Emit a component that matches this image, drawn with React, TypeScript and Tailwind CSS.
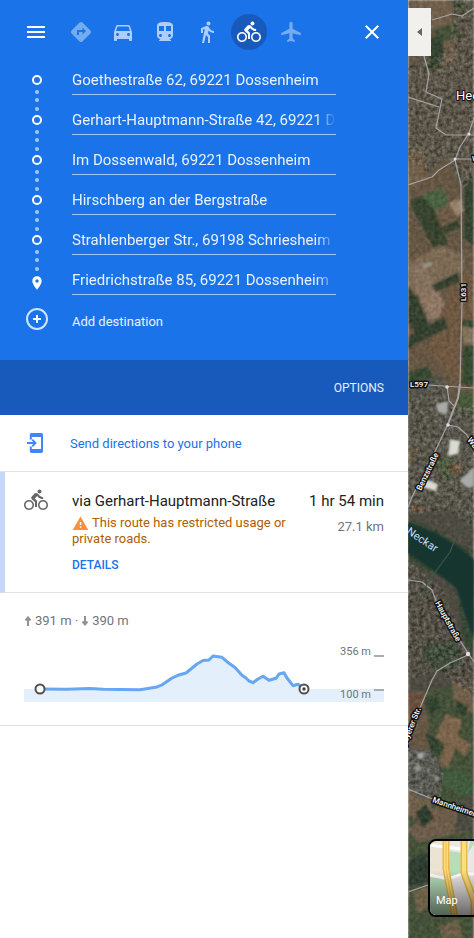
import React, { useState } from 'react';
import {
  MdClose,
  MdDirections,
  MdDirectionsBike,
  MdDirectionsCar,
  MdDirectionsTransit,
  MdDirectionsWalk,
  MdMenu,
  MdPlace,
  MdWarning,
} from 'react-icons/md';

const STOPS = [
  'Goethestraße 62, 69221 Dossenheim',
  'Gerhart-Hauptmann-Straße 42, 69221 Dossenheim',
  'Im Dossenwald, 69221 Dossenheim',
  'Hirschberg an der Bergstraße',
  'Strahlenberger Str., 69198 Schriesheim',
  'Friedrichstraße 85, 69221 Dossenheim',
];

function PlaneIcon({ size }: { size: number }) {
  return (
    <svg width={size} height={size} viewBox="0 0 24 24" fill="currentColor" aria-hidden="true">
      <path d="M12 1.800c-1 0-1.600.800-1.600 1.700V8.800L2.200 13V15.200L10.400 13.300V18.500L8.200 20.300V22L12 21l3.800 1V20.300L13.600 18.500V13.300L21.800 15.200V13L13.600 8.800V3.500C13.600 2.600 13 1.800 12 1.800z" />
    </svg>
  );
}

const MODES = [
  { id: 'best', label: 'Best travel modes', icon: MdDirections, tone: 'text-white/40' },
  { id: 'car', label: 'Driving', icon: MdDirectionsCar, tone: 'text-white/65' },
  { id: 'transit', label: 'Transit', icon: MdDirectionsTransit, tone: 'text-white/65' },
  { id: 'walk', label: 'Walking', icon: MdDirectionsWalk, tone: 'text-white/65' },
  { id: 'bike', label: 'Cycling', icon: MdDirectionsBike, tone: 'text-white/65' },
  { id: 'flight', label: 'Flights', icon: PlaneIcon, tone: 'text-white/40' },
];

function TravelModes() {
  const [mode, setMode] = useState('bike');

  return (
    <header className="flex items-center justify-between px-6 pt-[14px] pb-[10px]">
      <button aria-label="Menu" className="text-white">
        <MdMenu size={24} />
      </button>
      <div className="mr-[36px] flex gap-[6px]">
        {MODES.map(({ id, label, icon: Icon, tone }) => (
          <button
            key={id}
            aria-label={label}
            aria-pressed={mode === id}
            onClick={() => setMode(id)}
            className={`flex size-9 items-center justify-center rounded-full ${
              mode === id ? 'bg-[#185abc] text-white' : tone
            }`}
          >
            <Icon size={24} />
          </button>
        ))}
      </div>
      <button aria-label="Close directions" className="text-white">
        <MdClose size={24} />
      </button>
    </header>
  );
}

function Waypoints() {
  return (
    <div className="flex pl-6">
      {/* Stop markers joined by dots */}
      <div aria-hidden="true" className="flex w-[26px] flex-col items-center pt-[15px]">
        {STOPS.slice(1).map((stop) => (
          <div key={stop} className="flex h-10 flex-col items-center">
            <span className="size-[10px] rounded-full border-2 border-white" />
            <span className="flex flex-1 flex-col justify-evenly">
              <i className="size-1 rounded-full bg-white/60" />
              <i className="size-1 rounded-full bg-white/60" />
              <i className="size-1 rounded-full bg-white/60" />
            </span>
          </div>
        ))}
        <MdPlace size={16} className="text-white" />
      </div>

      <ol className="ml-[22px] w-[264px]">
        {STOPS.map((stop, i) => (
          <li key={stop} className="flex h-10 items-center">
            <div className="h-[30px] w-full border-b border-white/60">
              <input
                type="text"
                aria-label={i === STOPS.length - 1 ? 'Destination' : `Stop ${i + 1}`}
                defaultValue={stop}
                className="h-full w-full bg-transparent text-[15px] text-white/90 outline-none [mask-image:linear-gradient(to_right,black_244px,transparent)]"
              />
            </div>
          </li>
        ))}
      </ol>
    </div>
  );
}

function PhoneIcon() {
  return (
    <svg width="24" height="24" viewBox="0 0 24 24" fill="#4285f4" aria-hidden="true">
      <path d="M7.500 2H17.300A1.800 1.800 0 0 1 19 3.800V20.200A1.800 1.800 0 0 1 17.300 22H7.500A1.800 1.800 0 0 1 5.800 20.200V15.500H7.800V18H17V6H7.800V8.500H5.800V3.800A1.800 1.800 0 0 1 7.500 2z" />
      <path d="M3 11.100h6.300L7.600 9.400l1.300-1.300L12.800 12l-3.900 3.900-1.300-1.300L9.300 12.900H3z" />
    </svg>
  );
}

function RouteCard() {
  return (
    <section className="flex min-h-[121px] border-b border-l-[5px] border-b-[#dfe1e3] border-l-[#c6d8f9] pt-4 pr-6 pl-[19px]">
      <MdDirectionsBike size={24} className="shrink-0 text-[#666]" />
      <div className="ml-6 flex-1 pt-px">
        <div className="flex justify-between text-[15px] leading-6 text-[#202124]">
          <h1>via Gerhart-Hauptmann-Straße</h1>
          <span>1 hr 54 min</span>
        </div>
        <div className="flex justify-between text-[13px] leading-4">
          <p className="mt-[2px] w-[224px] text-[#b06000]">
            <MdWarning size={17} className="-my-1 inline-block align-[-1px] text-[#fa903e]" /> This route has
            restricted usage or private roads.
          </p>
          <span className="mt-[6px] text-[#70757a]">27.1 km</span>
        </div>
        <button className="mt-[10px] block text-xs leading-4 font-medium text-[#1a73e8]">DETAILS</button>
      </div>
    </section>
  );
}

const PROFILE =
  '16,49 43,49.3 66,48.6 79,49.2 116,49.700 133,47 139,44.300 148,38 154,35.300 162,33 173,24 179,20.500 185,20 189,16 198,17.300 204,22.500 211,27.500 218,35.300 222,38 225,41 229,42.700 234,39 239,36.300 245,40.300 252,38.300 255,34 260,32.700 263,38 269,45.700 274,44.300 280,49';

function Elevation() {
  return (
    <section className="border-b border-[#dfe1e3] px-6 pt-5 pb-[23px]">
      <p className="flex items-center text-[13px] leading-4 text-[#70757a]">
        <svg width="8" height="10" viewBox="0 0 8 10" fill="none" stroke="#909498" strokeWidth="2" aria-hidden="true">
          <path d="M4 10V2M1.500 4.500 4 1.500l2.500 3" />
        </svg>
        <span className="ml-[3px]">391 m ·</span>
        <svg width="8" height="10" viewBox="0 0 8 10" className="ml-[3px]" fill="none" stroke="#909498" strokeWidth="2" aria-hidden="true">
          <path d="M4 0v8M1.500 5.500l2.500 3 2.500-3" />
        </svg>
        <span className="ml-[3px]">390 m</span>
      </p>
      <svg viewBox="0 0 360 62" className="mt-[11px] block w-full" role="img" aria-label="Elevation profile">
        <path d={`M0 62V49L${PROFILE} H360V62Z`} fill="#e3f0fc" />
        <polyline points={PROFILE} fill="none" stroke="#66a6f2" strokeWidth="3" strokeLinejoin="round" />
        <circle cx="16" cy="49" r="4.500" fill="#fff" stroke="#505050" strokeWidth="2" />
        <circle cx="280" cy="49" r="4.500" fill="#fff" stroke="#505050" strokeWidth="2" />
        <circle cx="280" cy="49" r="1.700" fill="#404040" />
        <path d="M350 16h10M350 50h10" stroke="#a9adb1" strokeWidth="2" />
        <g fontSize="11" fill="#70757a" textAnchor="end">
          <text x="347" y="15">356 m</text>
          <text x="347" y="58">100 m</text>
        </g>
      </svg>
    </section>
  );
}

function Satellite() {
  return (
    <svg
      viewBox="0 0 66 938"
      preserveAspectRatio="xMinYMin slice"
      className="absolute inset-0 h-full w-full"
      role="img"
      aria-label="Satellite map"
    >
      <defs>
        <filter id="soft" x="0" y="0" width="1" height="1">
          <feGaussianBlur stdDeviation="0.8" />
        </filter>
        <filter id="grain" x="0" y="0" width="1" height="1" colorInterpolationFilters="sRGB">
          <feTurbulence type="fractalNoise" baseFrequency="0.26" numOctaves="3" seed="4" />
          <feColorMatrix values="1.1 0 0 0 -.16  1.1 0 0 0 -.18  1.1 0 0 0 -.22  0 0 0 0 1" />
          <feGaussianBlur stdDeviation="0.6" />
        </filter>
        <clipPath id="towns">
          <path d="M0 66 20 60 42 45 46 0H66V180L55 188 40 158 18 172 0 160Z" />
          <path d="M0 402 28 380 48 408 66 405V528L40 510 0 515ZM0 560 35 590 55 640 66 660V700L30 670 0 680ZM0 750 25 750 36 775 32 800 0 790Z" />
        </clipPath>
      </defs>

      {/* Ground */}
      <g filter="url(#soft)">
        <path fill="#665643" d="M0 0H66V938H0Z" />
        <path fill="#595245" d="M0 62 25 55 45 40 46 0H66V180L50 184 40 155 20 175 0 160Z" />
        <path fill="#73604a" d="M4 0 42 0 44 22 26 30 3 26ZM28 42 46 36 50 58 34 70ZM0 150 16 148 20 178 0 190Z" />
        <path fill="#3f5034" d="M26 28 48 24 54 36 30 43ZM44 0 56 0 57 9 46 12Z" />
        <path fill="#2d402b" d="M18 38 34 36 37 52 32 68 18 70 22 54ZM56 180 66 180V245L56 240Z" />
        <path fill="#47643f" d="M14 195 34 188 41 202 27 212 18 208Z" />
        <path fill="#6e5a45" d="M26 214 52 196 56 212 36 228Z" />
        <path fill="#a18a71" d="M41 203 53 199 56 210 49 217Z" />
        <path fill="#30402c" d="M2 200 14 196 26 210 40 242 36 248 26 249 4 208ZM35 227 50 219 52 228 37 234Z" />
        <path fill="#806c54" d="M2 262 32 245 56 255 56 270 0 300Z" />
        <path fill="#8b7460" d="M0 267 14 262 40 310 37 317 20 320Z" />
        <path fill="#977b69" d="M14 298 30 290 40 312 24 320Z" />
        <path fill="#6f5941" d="M28 326 46 275 66 268V385L46 380 20 352Z" />
        <path fill="#2d3d2a" d="M24 285 50 272 52 281 28 292ZM0 285 9 298 21 326 8 335 0 322ZM0 337 36 317 40 328 8 344 0 350Z" />
        <path fill="#32472e" d="M54 320H66V330H56ZM54 347 66 345V385H54ZM0 372 20 366 28 380 0 383Z" />
        <path fill="#8a7860" d="M55 326 66 329V345L56 343Z" />
        <path fill="#53534a" d="M0 386 34 375 44 408 30 436 0 448ZM35 408 66 410V520L0 512V470Z" />
        <path fill="#445a38" d="M50 392H66V414L50 408ZM24 460 42 456 52 476 38 480Z" />
        <path fill="#73513b" d="M40 466 54 462 53 472 45 476ZM4 504 18 508 10 518 2 516Z" />
        <path fill="#4b493f" d="M0 512 40 508 66 520V700L20 690 0 692Z" />
        <path fill="#384633" d="M0 520 16 522 50 544 66 550V600L40 580 0 562Z" />
        <path fill="#304431" d="M14 646 48 640 55 665 34 672 15 660ZM50 600 66 610V650L56 646Z" />
        <path fill="#3f4f35" d="M16 690 40 686 66 692V940H0V790L30 800 22 735Z" />
        <path fill="#6b4d3a" d="M0 692 17 695 12 714 0 716Z" />
        <path fill="#80664b" d="M38 714 54 720 50 736 64 745 56 756 48 748 40 768 31 764 37 744 27 738Z" />
        <path fill="#72604a" d="M44 680 66 688V714L46 706ZM0 786 20 794 24 808 12 820 0 815Z" />
        <path fill="#2c3f2a" d="M17 732 28 738 36 746 32 756 22 750ZM48 700 60 706 58 716 46 712ZM16 700 28 696 34 708 20 714Z" />
        <path fill="#555a55" d="M0 748 24 750 36 772 30 792 14 800 0 788Z" />
        <path fill="#3c5a3a" d="M34 768 58 772 66 784V800L36 786Z" />
        <path fill="#6f5d49" d="M24 808 54 806 66 812V830L10 842 0 830Z" />
        <path fill="#4a4840" d="M50 806 66 792V832H46Z" />
        <path fill="#28382a" d="M8 812 18 804 26 818 14 828ZM0 862 18 852 24 880 0 888Z" />
        <path fill="#6e6047" d="M4 892 20 886 26 902 10 914ZM32 926 50 920 55 938H34Z" />
      </g>

      <rect width="66" height="938" filter="url(#grain)" opacity="0.14" />
      <rect width="66" height="938" filter="url(#grain)" opacity="0.26" clipPath="url(#towns)" />

      {/* River and large roofs */}
      <g filter="url(#soft)">
        <path fill="#17342f" d="M0 522 30 534 54 549 66 560V640L56 612 48 588 34 577 0 553Z" />
        <path fill="#d9dad2" d="M42 439 52 441 50 454 40 456ZM15 478 30 484 28 491 14 487Z" />
        <path fill="#a9aaa8" d="M51 481 66 467V486L60 488ZM28 404 40 401 39 415 30 412ZM10 753 16 752 15 759 9 758Z" />
        <path fill="#9a9488" d="M14 265 22 262 26 264 16 269ZM6 767 11 764 14 770 8 772ZM26 775 32 778 28 782Z" />
      </g>

      {/* Roads */}
      <g fill="none" stroke="#a7a3a5" strokeWidth="1.200" strokeLinejoin="round">
        <path d="M-1 0 2 14 16 56 21 74 18 92 34 99 28 128 38 135H66M24 20 44 14 54 16 66 8M0 97 31 107" />
        <path d="M66 118 61 133 52 147 47 160 53 185 54 300 52 384M47 159H66M47 160 31 170 24 177 0 185" />
        <path d="M20 385 66 388M39 386 41 401 47 407M0 507 4 497 23 460 40 424" />
        <path d="M52 384 50 398 40 424" strokeWidth="2" />
        <path d="M40 425 50 427 58 434 66 445M0 580 14 582 24 590 28 601 58 650 66 662M60 655 42 663 29 671 24 680 12 708 0 738" />
        <path d="M0 789 22 798 66 812M0 892 20 885" />
        <path d="M66 510 50 532 42 552 20 582 12 600" stroke="#40564a" />
      </g>
      <g fill="#e0dde0">
        <circle cx="47" cy="159" r="1.500" />
        <circle cx="61" cy="134" r="1.500" />
        <circle cx="39" cy="387" r="1.800" />
        <circle cx="40" cy="425" r="1.800" />
        <circle cx="60" cy="654" r="2.200" />
      </g>

      {/* Labels */}
      <g fill="#fff" stroke="#111" strokeWidth="3" strokeLinejoin="round" paintOrder="stroke" fontSize="8" fontWeight="500">
        <text x="48" y="100" fontSize="13" fontWeight="400" strokeWidth="2">Heddesheim</text>
        <text x="64" y="161">Wallstadter Str.</text>
        <text transform="translate(58 301) rotate(-90)">L631</text>
        <text x="2" y="387">L597</text>
        <text transform="translate(13 491) rotate(-64)">Benzstraße</text>
        <text transform="translate(59 440) rotate(52)">Wallstadter Str.</text>
        <text transform="translate(-2 533) rotate(34)" fontSize="11" fontWeight="400" fill="#c3ddf7" stroke="#17342f" strokeWidth="1">Neckar</text>
        <text transform="translate(27 603) rotate(61)">Hauptstraße</text>
        <text transform="translate(-4 751) rotate(-68)">Speyerer Str.</text>
        <text transform="translate(24 802) rotate(19)">Mannheimer Str.</text>
      </g>
    </svg>
  );
}

function MapTypeSwitch() {
  return (
    <button className="absolute top-[839px] left-5 h-[78px] w-[78px] overflow-hidden rounded-lg border-2 border-black bg-[#ece4d2]">
      <svg viewBox="0 0 74 74" className="h-full w-full" aria-hidden="true">
        <defs>
          <linearGradient id="shade" x1="0" y1="0" x2="0" y2="1">
            <stop offset="0.4" stopColor="#000" stopOpacity="0" />
            <stop offset="1" stopColor="#000" stopOpacity="0.55" />
          </linearGradient>
        </defs>
        <path fill="#e9e8e6" d="M18 0H74V74H22Z" />
        <path fill="#b7ddb9" d="M0 36 16 38 22 74H0ZM20 10 32 12V34L18 36ZM40 0 46 0 38 12Z" />
        <path d="M0 4 14 6 32 8M0 34 18 38 32 33H74" fill="none" stroke="#fff" strokeWidth="3" />
        <path d="M16 0V28L25 76M34 0V32L44 60V76" fill="none" stroke="#e9b84a" strokeWidth="7" />
        <path d="M16 0V28L25 76M34 0V32L44 60V76" fill="none" stroke="#ffdc7c" strokeWidth="4" />
        <path d="M16 0V28L25 76" fill="none" stroke="#edbd55" strokeWidth="1" />
        <path fill="url(#shade)" d="M0 0H74V74H0Z" />
      </svg>
      <span className="absolute bottom-[6px] left-[6px] text-[11px] leading-4 text-white">Map</span>
    </button>
  );
}

export default function App() {
  return (
    <div className="flex min-h-screen bg-white font-[Roboto,sans-serif]">
      <main className="w-[408px] shrink-0">
        <div className="bg-[#1a73e8]">
          <TravelModes />
          <Waypoints />
          <button className="flex h-[60px] items-start pl-[26px] text-[13px] leading-4 text-white/90">
            <svg width="22" height="22" viewBox="0 0 22 22" fill="none" strokeWidth="2" className="mt-2" aria-hidden="true">
              <circle cx="11" cy="11" r="10" stroke="#d1e3fa" />
              <path d="M11 7v8M7 11h8" stroke="#fff" />
            </svg>
            <span className="mt-[14px] ml-6">Add destination</span>
          </button>
        </div>
        <div className="flex h-[55px] items-center justify-end bg-[#185abc] px-6">
          <button className="text-xs text-white/90">OPTIONS</button>
        </div>
        <button className="flex h-[57px] w-full items-center border-b border-[#dfe1e3] px-6 text-[13px] text-[#1a73e8]">
          <PhoneIcon />
          <span className="ml-[22px] pt-px">Send directions to your phone</span>
        </button>
        <RouteCard />
        <Elevation />
      </main>

      <aside className="relative flex-1 overflow-hidden">
        <Satellite />
        <button
          aria-label="Collapse side panel"
          className="absolute top-2 left-0 flex h-12 w-[23px] items-center justify-center bg-[#f1f0ed]"
        >
          <svg width="5" height="8" viewBox="0 0 5 8" fill="#666" aria-hidden="true">
            <path d="M5 0V8L0 4Z" />
          </svg>
        </button>
        <MapTypeSwitch />
      </aside>
    </div>
  );
}
